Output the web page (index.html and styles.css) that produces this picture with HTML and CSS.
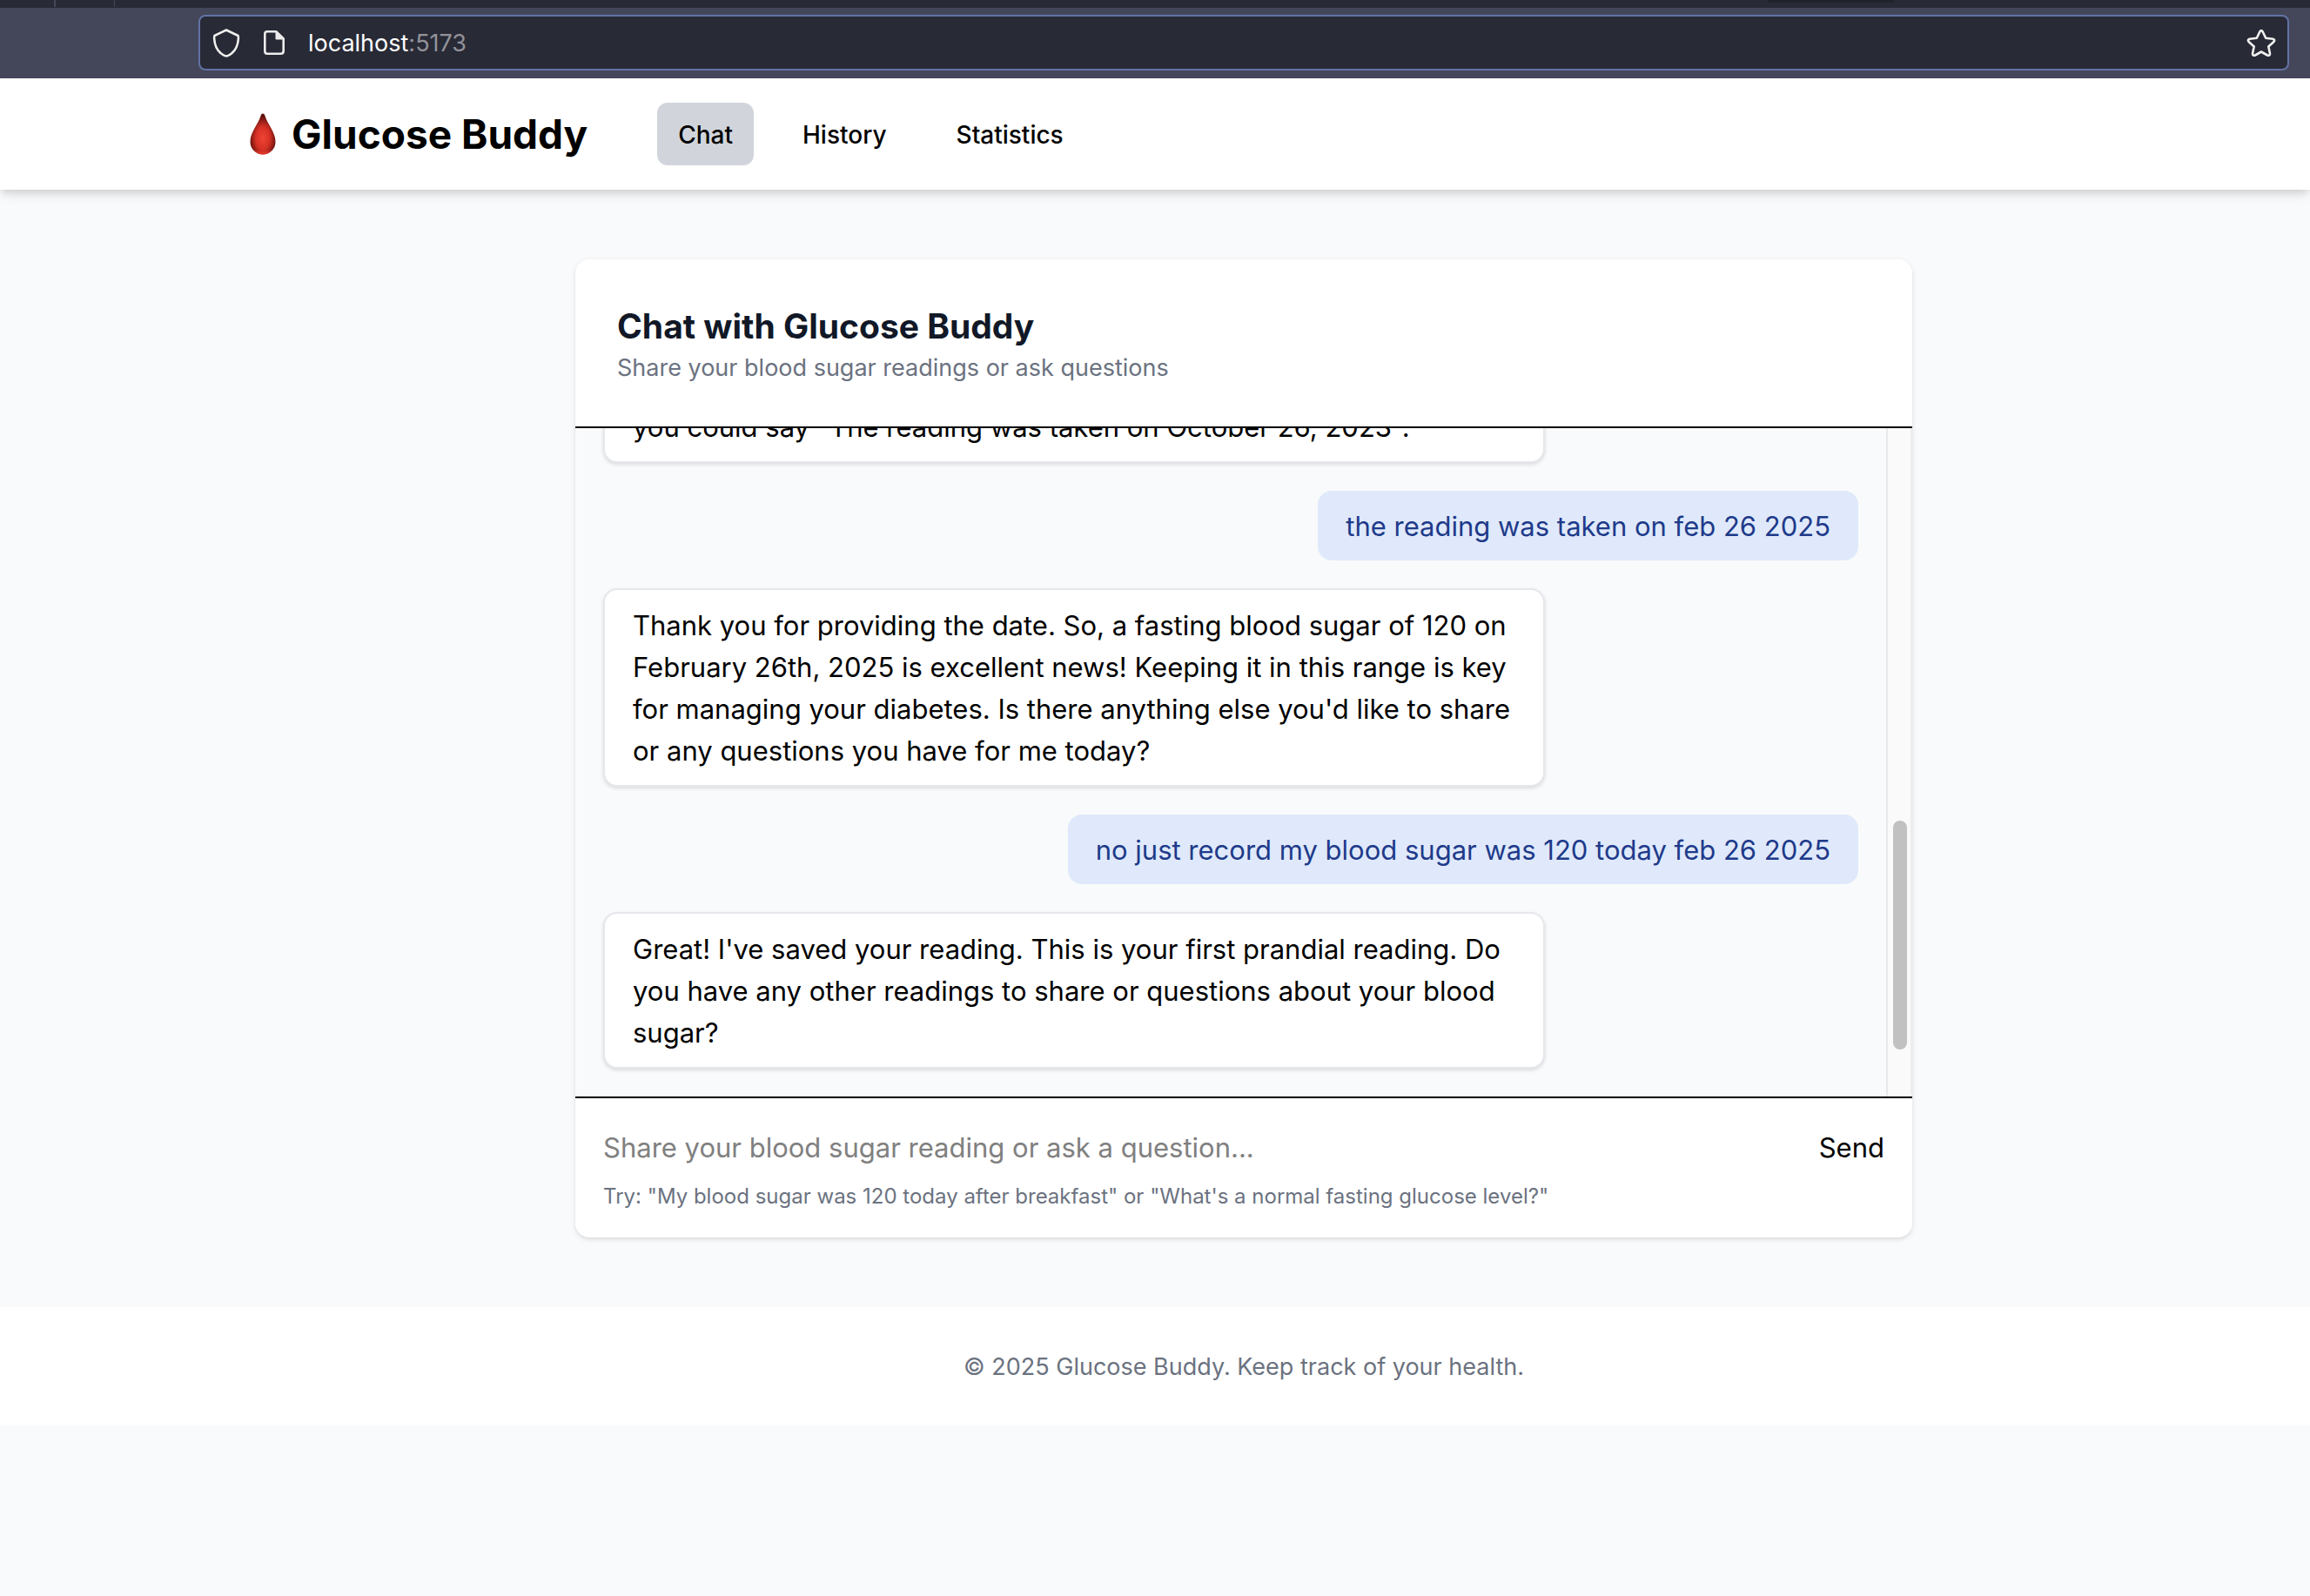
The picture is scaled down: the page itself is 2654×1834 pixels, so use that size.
FILE: index.html
```html
<!DOCTYPE html>
<html lang="en">
<head>
<meta charset="utf-8">
<meta name="viewport" content="width=device-width, initial-scale=1">
<title>Glucose Buddy</title>
<link rel="stylesheet" href="styles.css">
</head>
<body>
<div class="browser">
  <div class="tabstrip"><span class="tab tab-first"></span><span class="tab"></span><span class="tab-shade"></span></div>
  <div class="toolbar">
    <div class="urlbar">
      <svg class="icon" viewBox="0 0 32 34" width="32" height="34" aria-hidden="true"><path d="M16 2.500 L29.500 9 Q30 9.500 29.800 13 Q29 23.500 22.500 29 Q18 32.500 16 32.500 Q14 32.500 9.500 29 Q3 23.500 2.200 13 Q2 9.500 2.500 9 Z" fill="none" stroke="#f0f0ee" stroke-width="2.600" stroke-linejoin="round"/></svg>
      <svg class="icon" viewBox="0 0 26 28" width="26" height="28" aria-hidden="true"><path d="M5 1.300H15.500L23.700 9.500V23.500Q23.700 26.700 20.500 26.700H5Q2.300 26.700 2.300 23.500V4Q2.300 1.300 5 1.300Z" fill="none" stroke="#ececec" stroke-width="2.600" stroke-linejoin="round"/><path d="M15 1V10H24Z" fill="#ececec" stroke="#ececec" stroke-linejoin="round"/></svg>
      <span class="url">localhost<span class="port">:5173</span></span>
      <svg class="icon" viewBox="0 0 34 32" width="34" height="32" aria-hidden="true"><path d="M15.300 3.500Q17 0.800 18.700 3.500L22.200 10.700L30.300 11.700Q33.200 12.400 31.400 15L25.300 20.500L27 28.400Q27 31.600 24 30.500L17 26.500L10 30.500Q7 31.600 7 28.400L8.700 20.500L2.600 15Q0.800 12.400 3.700 11.700L11.800 10.700Z" fill="none" stroke="#f0f0ee" stroke-width="2.600" stroke-linejoin="round"/></svg>
    </div>
  </div>
</div>

<header class="site-header">
  <a class="brand" href="#">
    <svg class="drop" viewBox="0 0 30 48" width="30" height="48" aria-hidden="true">
      <defs>
        <radialGradient id="blood" cx="0.5" cy="0.6" r="0.55">
          <stop offset="0" stop-color="#ee4435"/><stop offset="0.5" stop-color="#d73125"/><stop offset="1" stop-color="#5c100c"/>
        </radialGradient>
        <linearGradient id="glow" x1="0" y1="0" x2="0" y2="1">
          <stop offset="0.88" stop-color="#f03d30" stop-opacity="0"/><stop offset="1" stop-color="#f03d30"/>
        </linearGradient>
      </defs>
      <path d="M15 0.500C16.400 0.500 17 1.800 17.600 3.600C20.500 13 29.500 22 29.500 33A14.500 14.500 0 0 1 0.500 33C0.500 22 9.500 13 12.400 3.600C13 1.800 13.600 0.500 15 0.500Z" fill="url(#blood)"/>
      <path d="M15 0.500C16.400 0.500 17 1.800 17.600 3.600C20.500 13 29.500 22 29.500 33A14.500 14.500 0 0 1 0.500 33C0.500 22 9.500 13 12.400 3.600C13 1.800 13.600 0.500 15 0.500Z" fill="url(#glow)"/>
    </svg>
    <span>Glucose Buddy</span>
  </a>
  <nav class="nav">
    <a class="nav-link active" href="#chat">Chat</a>
    <a class="nav-link" href="#history">History</a>
    <a class="nav-link" href="#statistics">Statistics</a>
  </nav>
</header>

<main class="main">
  <section class="card">
    <div class="card-head">
      <h1 class="title">Chat with Glucose Buddy</h1>
      <p class="subtitle">Share your blood sugar readings or ask questions</p>
    </div>
    <div class="chat">
      <div class="messages">
        <div class="bubble bot">you could say "The reading was taken on October 26, 2023".</div>
        <div class="bubble user">the reading was taken on feb 26 2025</div>
        <div class="bubble bot">Thank you for providing the date. So, a fasting blood sugar of 120 on February 26th, 2025 is excellent news! Keeping it in this range is key for managing your diabetes. Is there anything else you'd like to share or any questions you have for me today?</div>
        <div class="bubble user">no just record my blood sugar was 120 today feb 26 2025</div>
        <div class="bubble bot">Great! I've saved your reading. This is your first prandial reading. Do you have any other readings to share or questions about your blood sugar?</div>
      </div>
      <div class="scroll-track"><div class="scroll-thumb"></div></div>
    </div>
    <form class="composer">
      <div class="composer-row">
        <input class="field" type="text" aria-label="Message" placeholder="Share your blood sugar reading or ask a question...">
        <button class="send" type="button">Send</button>
      </div>
      <p class="hint">Try: "My blood sugar was 120 today after breakfast" or "What's a normal fasting glucose level?"</p>
    </form>
  </section>
</main>

<footer class="footer">© 2025 Glucose Buddy. Keep track of your health.</footer>
</body>
</html>
```
FILE: styles.css
```css
* { box-sizing: border-box; margin: 0; padding: 0; }
body {
  background: #f9fafb;
  color: #000;
  font-family: Inter, "Liberation Sans", sans-serif;
  font-size: 31px;
  line-height: 48px;
}
a { color: inherit; text-decoration: none; }

/* Browser chrome */
.tabstrip { display: flex; height: 9px; background: #282a36; }
.tab { width: 68px; height: 8px; border-right: 1px solid #44475a; }
.tab-first { width: 64px; border-right-width: 2px; }
.tab-shade { width: 144px; height: 3px; margin-left: auto; margin-right: 478px; background: #20222b; }
.toolbar { padding: 8px 24px 9px 228px; background: #44475a; }
.urlbar {
  display: flex;
  align-items: center;
  gap: 26px;
  height: 64px;
  padding: 0 13px 0 14px;
  border: 2px solid #6272a4;
  border-radius: 8px;
  background: #282a36;
}
.icon { flex: none; }
.url { flex: 1; padding-top: 2px; color: #fff; font-size: 27px; line-height: 40px; }
.port { color: #929299; }

/* Site header */
.site-header {
  position: relative;
  display: flex;
  align-items: center;
  gap: 80px;
  padding: 28px 48px 28px 287px;
  background: #fff;
  box-shadow: 0 8px 12px -2px rgba(0, 0, 0, 0.1), 0 4px 8px -2px rgba(0, 0, 0, 0.1);
}
.brand { display: flex; align-items: center; gap: 18px; font-size: 46px; font-weight: 700; line-height: 64px; }
.nav { display: flex; gap: 32px; }
.nav-link { padding: 17px 24px 15px; border-radius: 12px; font-size: 28px; font-weight: 500; line-height: 40px; }
.active { background: #d1d5db; }

/* Chat card */
.main { padding: 80px 0 80px 204px; }
.card {
  max-width: 1536px;
  margin: 0 auto;
  overflow: hidden;
  border-radius: 16px;
  background: #fff;
  box-shadow: 0 2px 6px rgba(0, 0, 0, 0.1), 0 2px 4px -2px rgba(0, 0, 0, 0.1);
}
.card-head { padding: 49px 48px 47px; border-bottom: 2px solid #000; }
.title { color: #111827; font-size: 39px; font-weight: 700; line-height: 56px; }
.subtitle { color: #6b7280; font-size: 27px; line-height: 40px; }
.chat { display: flex; height: 768px; background: #f9fafb; }
.messages {
  display: flex;
  flex: 1;
  flex-direction: column;
  justify-content: flex-end;
  gap: 32px;
  padding: 32px;
  overflow: hidden;
}
.bubble { flex: none; border-radius: 16px; padding: 17px 32px 15px; }
.bot {
  width: 75%;
  border: 2px solid #e5e7eb;
  background: #fff;
  box-shadow: 0 2px 4px rgba(0, 0, 0, 0.12);
}
.user { align-self: flex-end; background: #dfe9fb; color: #1e3a8a; }
.scroll-track {
  display: grid;
  grid-template-rows: 451fr 263fr 54fr;
  width: 30px;
  padding: 0 4px 0 6px;
  border-left: 2px solid #e8e8e8;
  border-right: 2px solid #ededed;
  background: #fafafa;
}
.scroll-thumb { grid-row: 2; border-radius: 8px; background: #c1c1c1; }
.composer { padding: 33px 32px 31px; border-top: 2px solid #000; }
.composer-row { display: flex; gap: 16px; margin-bottom: 16px; }
.field, .send { border: 0; background: none; color: #000; font: inherit; height: 48px; }
.field { flex: 1; min-width: 0; outline: 0; }
.field::placeholder { color: #808080; opacity: 1; }
.hint { color: #6b7280; font-size: 24px; line-height: 32px; }

/* Footer */
.footer {
  padding: 49px 0 47px 204px;
  background: #fff;
  color: #6b7280;
  font-size: 27px;
  line-height: 40px;
  text-align: center;
}
```
